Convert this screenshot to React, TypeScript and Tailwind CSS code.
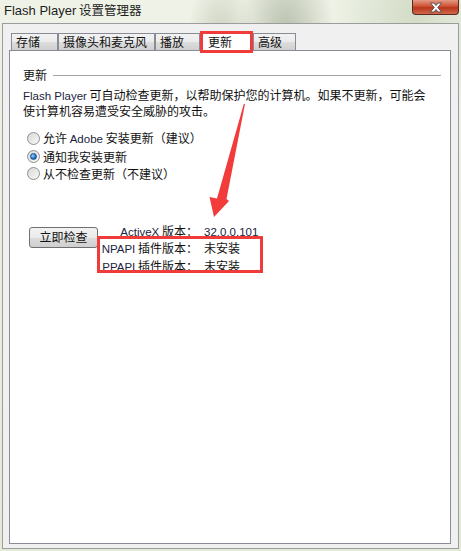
import React from "react";

const tabs = [
  { label: "存储", w: "w-[47px]" },
  { label: "摄像头和麦克风", w: "w-[97px]" },
  { label: "播放", w: "w-[45px]" },
  { label: "更新", w: "w-[53px]", active: true },
  { label: "高级", w: "w-[43px]" },
];

// latin words render narrower in the original (Segoe UI)
function L({ children }: { children: React.ReactNode }) {
  return <span className="font-['Liberation_Sans',sans-serif] text-[11.5px] text-[#1b2340]">{children}</span>;
}

const options = [
  { label: <>允许 <L>Adobe</L> 安装更新（建议）</>, key: "allow", checked: false },
  { label: <>通知我安装更新</>, key: "notify", checked: true },
  { label: <>从不检查更新（不建议）</>, key: "never", checked: false },
];

function Radio({ checked }: { checked: boolean }) {
  return (
    <span className="flex h-[13px] w-[13px] items-center justify-center rounded-full border border-[#8e8f8f] bg-[linear-gradient(135deg,#d8d8d8,#f8f8f8)]">
      {checked && (
        <span className="h-[7px] w-[7px] rounded-full border border-[#1b4f8c] bg-[radial-gradient(circle_at_35%_35%,#9ad4ff,#1d6fc9_60%,#0b3f86)]" />
      )}
    </span>
  );
}

export default function App() {
  return (
    <div className="relative h-[551px] w-[461px] overflow-hidden bg-[radial-gradient(ellipse_at_62%_6%,#b9c0ad_0%,transparent_12%),radial-gradient(ellipse_at_48%_8%,#c9cfbd_0%,transparent_10%),radial-gradient(ellipse_at_90%_3%,#d3dcc6_0%,transparent_14%),linear-gradient(#eef2e7,#e3ead6)] font-['Noto_Sans_CJK_SC',sans-serif] text-[12px] text-[#111]">
      {/* title bar */}
      <div className="flex h-[23px] items-start justify-between">
        <span className="pl-[4px] pt-[1px] text-[12.5px] leading-[18px] text-[#1e1e1e]">
          <span className="font-['Liberation_Sans',sans-serif] text-[13px]">Flash Player</span> 设置管理器
        </span>
        <div className="mr-[2px] flex h-[15px] w-[47px] items-center justify-center rounded-b-[4px] border border-t-0 border-[#5a2a22] bg-[linear-gradient(#e49a86,#cf5233_45%,#b7361c_55%,#d2694c)]">
          <svg width="14" height="11" viewBox="0 0 14 11">
            <path d="M1.5 1 H5 L7 3.5 L9 1 H12.5 L8.8 5.5 L12.5 10 H9 L7 7.5 L5 10 H1.5 L5.2 5.5 Z" fill="#fff" stroke="#4a4a4a" strokeWidth="0.9" />
          </svg>
        </div>
      </div>

      {/* window body */}
      <div className="ml-[2px] flex h-[526px] w-[457px] flex-col border border-[#9c9c9c] bg-[#f0f0f0] pb-[4px] pl-[6px] pr-[7px] pt-[7px]">
        <div className="flex h-[19px] items-end pl-[2px]">
          {tabs.map((t) =>
            t.active ? (
              <div key={t.label} className={`${t.w} relative z-10 -mb-[3px] h-[22px] border-[3px] border-[#f03b3b] bg-white pl-[5px] leading-[15px]`}>
                {t.label}
              </div>
            ) : (
              <div key={t.label} className={`${t.w} h-[17px] border border-b-0 border-[#898c95] bg-[linear-gradient(#f2f2f2,#ebebeb_50%,#dddddd_51%,#cfcfcf)] pl-[4px] leading-[16px]`}>
                {t.label}
              </div>
            )
          )}
        </div>

        <div className="h-[494px] border border-[#898c95] bg-white pl-[13px] pr-[9px] pt-[17px]">
          <div className="flex items-center gap-[6px] leading-[13px]">
            <span>更新</span>
            <span className="mt-[1px] h-px flex-1 bg-[#a5a5a5]" />
          </div>

          <p className="mt-[7px] leading-[13.5px]">
            <L>Flash Player</L> 可自动检查更新，以帮助保护您的计算机。如果不更新，可能会
            <br />
            使计算机容易遭受安全威胁的攻击。
          </p>

          <div className="mt-[13px] flex flex-col pl-[4px]">
            {options.map((o) => (
              <label key={o.key} className="flex h-[17.5px] items-center gap-[3px]">
                <Radio checked={o.checked} />
                <span className="leading-[13px]">{o.label}</span>
              </label>
            ))}
          </div>

          <div className="mt-[40px] flex items-start pl-[6px]">
            <button className="mt-[4px] h-[21px] w-[69px] rounded-[3px] border border-[#707070] bg-[linear-gradient(#f2f2f2,#ebebeb_50%,#dddddd_51%,#cfcfcf)] text-[12px] leading-[18px]">
              立即检查
            </button>
            <div className="grid grid-cols-[100px_auto] gap-x-[6px] leading-[16.5px]">
              <span className="text-right"><L>ActiveX</L> 版本：</span>
              <span><L>32.0.0.101</L></span>
              <span className="text-right"><L>NPAPI</L> 插件版本：</span>
              <span>未安装</span>
              <span className="text-right"><L>PPAPI</L> 插件版本：</span>
              <span>未安装</span>
            </div>
          </div>
        </div>
      </div>

      {/* annotations */}
      <div className="absolute left-[97px] top-[236px] h-[37px] w-[166px] border-[3px] border-[#f03b3b]" />
      <svg className="absolute left-[205px] top-[100px]" width="45" height="120" viewBox="0 0 45 120">
        <polygon points="40,4 21.5,99 24,101 9,117 4.5,97 12,98.5 38.8,4" fill="#f23c3c" />
      </svg>
    </div>
  );
}
